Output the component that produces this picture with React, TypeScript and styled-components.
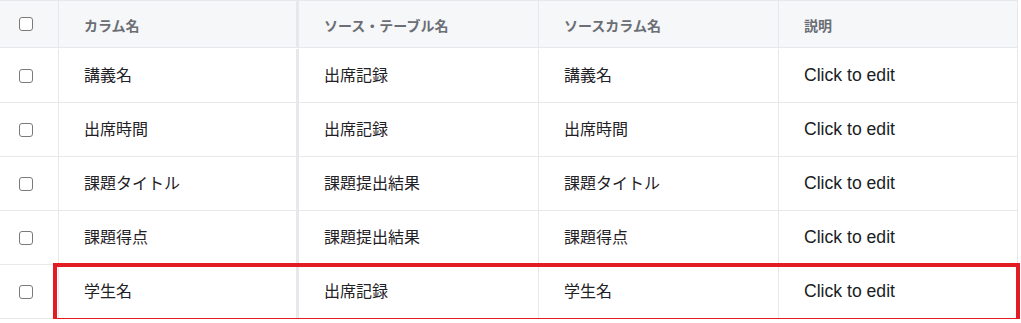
import React from 'react';
import styled, { createGlobalStyle } from 'styled-components';

const GlobalStyle = createGlobalStyle`
  html,
  body {
    background-color: #fff;
    margin: 0;
    padding: 0;
  }

  body {
    font-family: 'Liberation Sans', 'Noto Sans CJK JP', sans-serif;
  }
`;

const Table = styled.div`
  display: flex;
  flex-direction: column;
  width: 1018px;
`;

const Row = styled.div<{ header?: boolean }>`
  background-color: ${(p) => (p.header ? '#f6f7f9' : '#fff')};
  border-bottom: 1px solid #e6e8ec;
  border-top: ${(p) => (p.header ? '1px solid #e6e8ec' : 'none')};
  border-right: 1px solid #e6e8ec;
  display: grid;
  grid-template-columns: 58px 238px 242px 240px 240px;
  height: ${(p) => (p.header ? '46px' : '53px')};
  margin-bottom: ${(p) => (p.header ? '1px' : '0')};
  position: relative;
`;

const Cell = styled.div<{ divider?: 'none' | 'thin' | 'handle' }>`
  align-items: center;
  border-left: ${(p) =>
    p.divider === 'handle'
      ? '3px solid #e6e8ec'
      : p.divider === 'none'
        ? 'none'
        : '1px solid #e6e8ec'};
  display: flex;
  overflow: hidden;
  padding-left: 25px;
  white-space: nowrap;
`;

const CheckCell = styled.div`
  align-items: center;
  display: flex;
  padding-left: 19px;
`;

const Checkbox = styled.span`
  background-color: #fff;
  border: 1.5px solid #7a7a7a;
  border-radius: 3px;
  box-sizing: border-box;
  display: block;
  height: 14px;
  width: 14px;
`;

const HeadText = styled.span`
  color: #6b6e75;
  font-size: 14px;
  font-weight: 700;
  margin-top: 2px;
`;

const BodyText = styled.span`
  color: #1f2126;
  font-size: 16px;
  margin-bottom: 3px;
`;

const EditText = styled.span`
  color: #1a1d24;
  font-size: 17.6px;
`;

const Highlight = styled.div`
  border: 4px solid #e31b23;
  bottom: -4px;
  left: 53px;
  pointer-events: none;
  position: absolute;
  right: -3px;
  top: -2px;
`;

type Item = {
  column: string;
  table: string;
  source: string;
  marked?: boolean;
};

const items: Item[] = [
  { column: '講義名', table: '出席記録', source: '講義名' },
  { column: '出席時間', table: '出席記録', source: '出席時間' },
  { column: '課題タイトル', table: '課題提出結果', source: '課題タイトル' },
  { column: '課題得点', table: '課題提出結果', source: '課題得点' },
  { column: '学生名', table: '出席記録', source: '学生名', marked: true },
];

const headers = ['カラム名', 'ソース・テーブル名', 'ソースカラム名', '説明'];

const dividerFor = (i: number) => (i === 1 ? 'handle' : 'thin');

export default function App() {
  return (
    <>
      <GlobalStyle />
      <Table>
        <Row header>
          <CheckCell>
            <Checkbox />
          </CheckCell>
          {headers.map((h, i) => (
            <Cell key={h} divider={dividerFor(i)}>
              <HeadText>{h}</HeadText>
            </Cell>
          ))}
        </Row>
        {items.map((item) => (
          <Row key={item.column}>
            <CheckCell>
              <Checkbox />
            </CheckCell>
            <Cell divider="thin">
              <BodyText>{item.column}</BodyText>
            </Cell>
            <Cell divider="handle">
              <BodyText>{item.table}</BodyText>
            </Cell>
            <Cell divider="thin">
              <BodyText>{item.source}</BodyText>
            </Cell>
            <Cell divider="thin">
              <EditText>Click to edit</EditText>
            </Cell>
            {item.marked ? <Highlight /> : undefined}
          </Row>
        ))}
      </Table>
    </>
  );
}
